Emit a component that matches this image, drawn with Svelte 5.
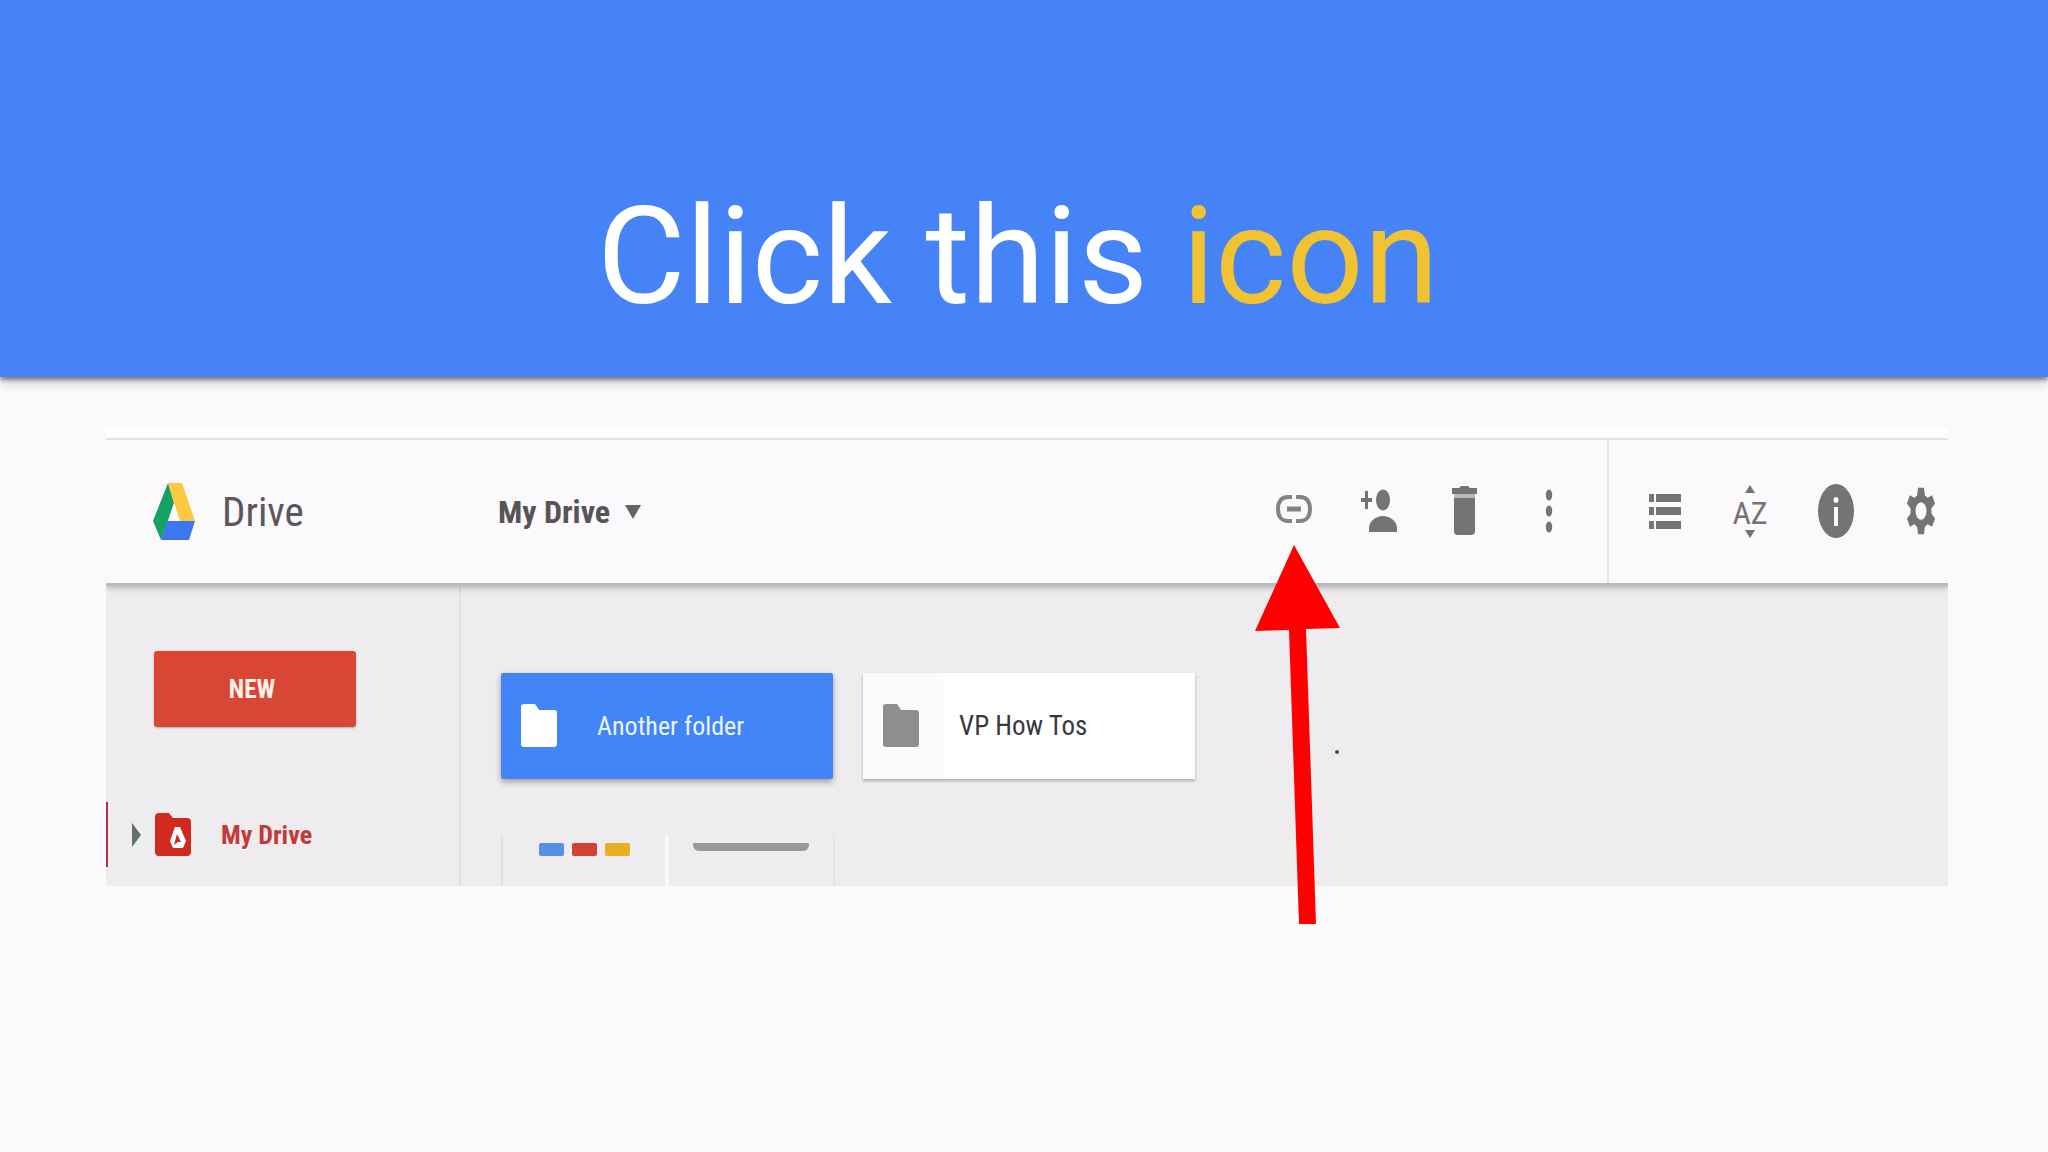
<script lang="ts">
  type Folder = { name: string; selected: boolean };

  let folders: Folder[] = $state([
    { name: "Another folder", selected: true },
    { name: "VP How Tos", selected: false },
  ]);

  function select(name: string) {
    for (const folder of folders) folder.selected = folder.name === name;
  }
</script>

<header class="banner">
  <h1>Click this <span>icon</span></h1>
</header>

<main class="drive">
  <div class="strip"></div>
  <div class="toolbar">
    <a class="brand" href="#drive">
      <svg width="42" height="58" viewBox="0 0 42 58" aria-hidden="true">
        <path fill="#13a261" d="M15 0l6 20L8 57 0 38z" />
        <path fill="#fdc943" d="M15 0h14l13 38H27z" />
        <path fill="#3b78f0" d="M14 38h28l-6 19H8z" />
      </svg>
      <span>Drive</span>
    </a>
    <button class="crumb">
      My Drive
      <svg width="16" height="14" viewBox="0 0 16 14" aria-hidden="true"><path d="M0 0h16L8 14z" /></svg>
    </button>

    <div class="actions">
      <div class="target">
        <button class="tool" aria-label="Get link">
          <svg viewBox="0 0 44 64">
            <g fill="none" stroke="#858385" stroke-width="4">
              <path d="M20 19h-4C9 19 6 24 6 31s3 12 10 12h4M24 19h4c7 0 10 5 10 12s-3 12-10 12h-4" />
              <path d="M15 31h14" stroke-width="5" />
            </g>
          </svg>
        </button>
        <svg class="arrow" width="86" height="380" viewBox="0 0 86 380" aria-hidden="true">
          <path fill="#f00" d="M39 0l46 83-34 1 10 295H44L34 85 0 86z" />
        </svg>
      </div>
      <button class="tool" aria-label="Share">
        <svg viewBox="0 0 44 64">
          <ellipse cx="26" cy="20" rx="7" ry="10.5" />
          <path d="M12 52v-4c0-7 7-12 14-12s14 5 14 12v4zM8 11h3v7h4v4h-4v7H8v-7H4v-4h4z" />
        </svg>
      </button>
      <button class="tool" aria-label="Remove">
        <svg viewBox="0 0 44 64">
          <path d="M10 8h7l2-2h7l2 2h7v6H10zM12 18h21v33q0 4-4 4H16q-4 0-4-4z" />
          <path d="M12 14h21v4H12z" fill="#bbb9bb" />
        </svg>
      </button>
      <button class="tool" aria-label="More actions">
        <svg viewBox="0 0 44 64">
          <ellipse cx="22" cy="15" rx="3.2" ry="5.5" />
          <ellipse cx="22" cy="31" rx="3.2" ry="5.5" />
          <ellipse cx="22" cy="47" rx="3.2" ry="5.5" />
        </svg>
      </button>
    </div>

    <div class="actions view">
      <button class="tool" aria-label="List view">
        <svg viewBox="0 0 44 64">
          <path d="M5 14h5v8H5zM12 14h25v8H12zM5 27h5v8H5zM12 27h25v8H12zM5 41h5v8H5zM12 41h25v8H12z" />
        </svg>
      </button>
      <button class="tool" aria-label="Sort">
        <svg viewBox="0 0 44 64">
          <path d="M21 5l5 8H16zM21 58l5-8H16z" />
          <text x="21" y="44" text-anchor="middle">AZ</text>
        </svg>
      </button>
      <button class="tool" aria-label="Details">
        <svg viewBox="0 0 44 64">
          <ellipse cx="22" cy="31" rx="18" ry="27" />
          <g fill="#fbf9fc">
            <ellipse cx="22" cy="20" rx="2.5" ry="3" />
            <path d="M20 27h4v19h-4z" />
          </g>
        </svg>
      </button>
      <button class="tool" aria-label="Settings">
        <svg viewBox="0 0 44 64">
          <g transform="translate(22 31) scale(1 1.6)">
            <circle r="8" fill="none" stroke="#757375" stroke-width="5" />
            {#each [0, 60, 120, 180, 240, 300] as angle}
              <path d="M-4-9l1-5.5h6l1 5.5z" transform="rotate({angle})" />
            {/each}
          </g>
        </svg>
      </button>
    </div>
  </div>

  <div class="body">
    <nav class="sidebar">
      <button class="new">NEW</button>
      <a class="nav-item" href="#my-drive">
        <svg class="caret" width="9" height="24" viewBox="0 0 9 24" aria-hidden="true"><path d="M0 0l9 12-9 12z" /></svg>
        <svg width="36" height="44" viewBox="0 0 36 44" aria-hidden="true">
          <path fill="#cf2a20" d="M4 0h10l4 5h14q4 0 4 4v30q0 4-4 4H4q-4 0-4-4V4q0-4 4-4z" />
          <path fill="#fff" d="M20 14h5l6 14-3 7H18l-3-7z" />
          <path fill="#cf2a20" d="M22 21l4 8h-3l-4 3z" />
        </svg>
        <span>My Drive</span>
      </a>
    </nav>

    <section class="files">
      <div class="folders">
        {#each folders as folder}
          <button class="folder" class:selected={folder.selected} onclick={() => select(folder.name)}>
            <span class="folder-icon">
              <svg width="36" height="44" viewBox="0 0 36 44" aria-hidden="true">
                <path d="M3 0h11l4 6h15q3 0 3 3v31q0 3-3 3H3q-3 0-3-3V3q0-3 3-3z" />
              </svg>
            </span>
            <span>{folder.name}</span>
          </button>
        {/each}
      </div>
      <div class="previews">
        <div class="preview chips">
          <i class="blue"></i>
          <i class="red"></i>
          <i class="yellow"></i>
        </div>
        <div class="preview"><i class="line"></i></div>
      </div>
      <i class="speck"></i>
    </section>
  </div>
</main>

<style>
  :global(body) {
    margin: 0;
    min-height: 100vh;
    background: #fbf9fc;
    font-family: "Roboto Condensed", "Liberation Sans Narrow", Roboto, sans-serif;
  }
  button {
    padding: 0;
    border: 0;
    background: none;
    font: inherit;
    color: inherit;
    cursor: pointer;
  }
  a {
    color: inherit;
    text-decoration: none;
  }
  svg {
    display: block;
    flex: none;
  }

  .banner {
    box-sizing: border-box;
    height: 377px;
    padding: 177px 12px 0 0;
    background: #4583f6;
    box-shadow: 0 3px 4px #0006, 0 5px 12px #0003;
    text-align: center;
  }
  h1 {
    margin: 0;
    font-family: Roboto, sans-serif;
    font-size: 136px;
    font-weight: 400;
    line-height: 160px;
    color: #fff;
  }
  h1 span {
    color: #f1c232;
  }

  .drive {
    margin: 51px 100px 0 106px;
  }
  .strip {
    height: 10px;
    background: #fff;
  }
  .toolbar {
    position: relative;
    display: flex;
    align-items: center;
    height: 148px;
    border-top: 2px solid #e4e2e5;
    border-bottom: 3px solid #bcbabd;
    box-sizing: border-box;
    box-shadow: 0 3px 5px #0003;
    clip-path: inset(0 0 -400px 0);
    z-index: 1;
  }
  .brand {
    box-sizing: border-box;
    display: flex;
    align-items: center;
    gap: 27px;
    width: 392px;
    padding-left: 47px;
    font-size: 41px;
    color: #5a585b;
  }
  .crumb {
    display: flex;
    align-items: center;
    gap: 15px;
    font-size: 32px;
    font-weight: 700;
    color: #565457;
  }
  .crumb svg {
    fill: #666467;
  }
  .actions {
    display: flex;
    align-items: center;
    gap: 41px;
    height: 100%;
    margin-left: auto;
    padding-right: 36px;
  }
  .view {
    margin-left: 0;
    padding: 0 5px 0 35px;
    border-left: 2px solid #e9e7ea;
  }
  .target {
    position: relative;
  }
  .tool svg {
    width: 44px;
    height: 64px;
    fill: #757375;
  }
  .tool text {
    font-size: 32px;
  }
  .arrow {
    position: absolute;
    top: 67px;
    left: -17px;
    pointer-events: none;
  }

  .body {
    display: flex;
    height: 300px;
    background: #eeecef;
    overflow: hidden;
  }
  .sidebar {
    box-sizing: border-box;
    width: 355px;
    padding-top: 65px;
    border-right: 2px solid #e2e0e3;
  }
  .new {
    display: block;
    width: 202px;
    height: 76px;
    margin-left: 48px;
    padding-right: 6px;
    border-radius: 3px;
    background: linear-gradient(#e04434, #d64735 50%);
    box-shadow: 0 1px 2px #0004;
    font-size: 25px;
    font-weight: 700;
    color: #fff0e8;
  }
  .nav-item {
    display: flex;
    align-items: center;
    height: 65px;
    margin-top: 75px;
    border-left: 2px solid #b03040;
    font-size: 26px;
    font-weight: 700;
    color: #c23a3c;
  }
  .nav-item span {
    padding-left: 30px;
  }
  .caret {
    margin: 0 14px 0 24px;
    fill: #63716c;
  }

  .files {
    position: relative;
    display: flex;
    flex: 1;
    flex-direction: column;
    justify-content: space-between;
    padding: 87px 0 0 40px;
  }
  .folders {
    display: flex;
    gap: 30px;
  }
  .folder {
    display: flex;
    align-items: center;
    gap: 16px;
    width: 332px;
    height: 106px;
    background: #fff;
    box-shadow: 0 2px 3px #0004;
    font-size: 27px;
    color: #3b393c;
  }
  .folder-icon {
    box-sizing: border-box;
    display: flex;
    align-items: center;
    width: 80px;
    height: 100%;
    padding-left: 20px;
    background: #fcfafd;
    fill: #8f8d90;
  }
  .selected {
    border-radius: 2px;
    background: #4285f7;
    box-shadow: 0 3px 6px #0005;
    font-size: 26px;
    color: #e6f5ff;
  }
  .selected .folder-icon {
    background: none;
    fill: #fff;
  }
  .previews {
    display: flex;
    width: 334px;
  }
  .preview {
    box-sizing: border-box;
    display: flex;
    flex: 1;
    gap: 8px;
    height: 50px;
    padding: 7px 24px 0;
    border-right: 2px solid #e6e4e7;
  }
  .chips {
    flex: 0 0 168px;
    padding-left: 36px;
    border-left: 2px solid #e2e0e3;
    border-right: 4px solid #faf8fb;
  }
  .chips i {
    width: 25px;
    height: 13px;
    border-radius: 2px;
  }
  .blue {
    background: #588fe4;
  }
  .red {
    background: #cf4433;
  }
  .yellow {
    background: #eaae24;
  }
  .line {
    width: 100%;
    height: 8px;
    border-radius: 1px 1px 6px 6px;
    background: #9a989b;
  }
  .speck {
    position: absolute;
    top: 164px;
    left: 874px;
    width: 4px;
    height: 4px;
    border-radius: 50%;
    background: #4a4860;
  }
</style>
